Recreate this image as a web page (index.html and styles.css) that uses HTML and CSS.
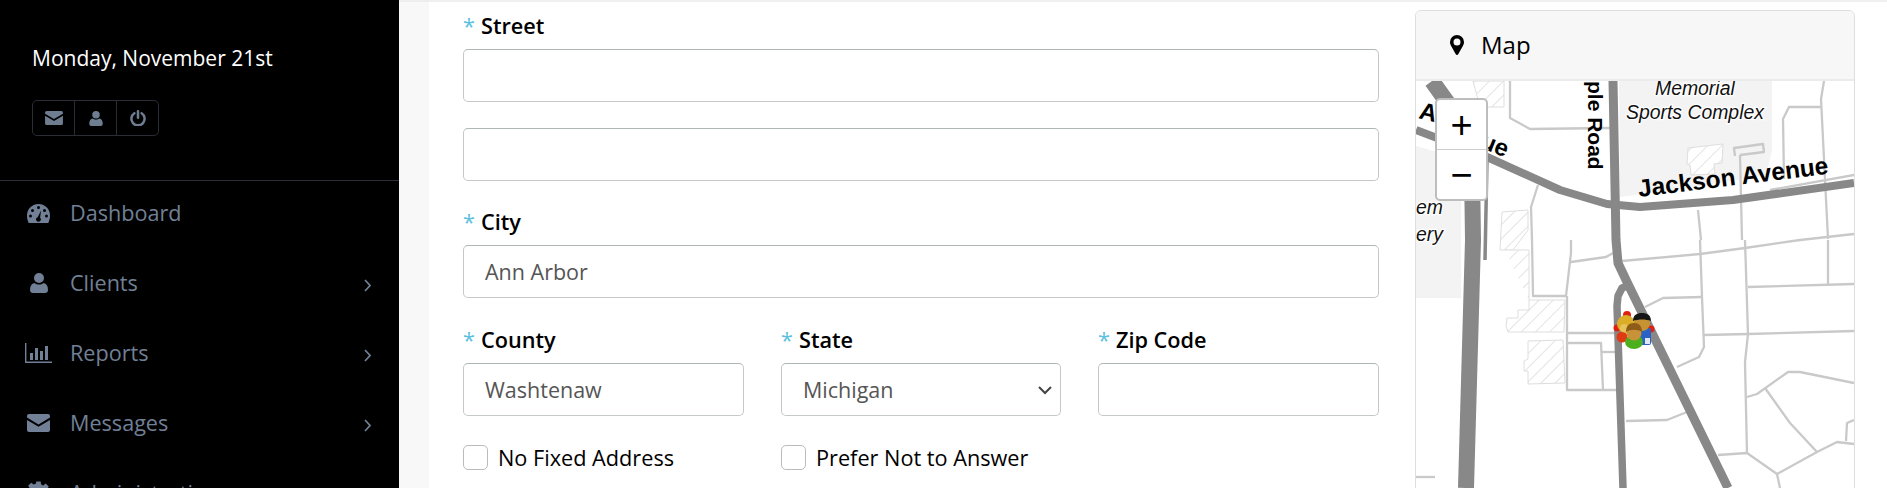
FILE: index.html
```html
<!DOCTYPE html>
<html lang="en">
<head>
<meta charset="utf-8">
<title>Client address</title>
<link rel="stylesheet" href="styles.css">
</head>
<body>
<svg class="defs" width="0" height="0" aria-hidden="true">
  <defs>
    <symbol id="i-mail" viewBox="0 0 23 18"><path fill="currentColor" d="M2 0h19a2 2 0 0 1 2 2v1.600L11.500 10.400 0 3.600V2a2 2 0 0 1 2-2zM0 6l11.500 6.800L23 6v10a2 2 0 0 1-2 2H2a2 2 0 0 1-2-2z"/></symbol>
    <symbol id="i-user" viewBox="0 0 18 20"><circle fill="currentColor" cx="9" cy="5" r="5"/><path fill="currentColor" d="M0 17c0-4 1.500-6.500 4.500-7 1.200 1 2.800 1.500 4.500 1.500s3.300-.5 4.500-1.500c3 .5 4.500 3 4.500 7 0 2-1.200 3-3 3H3c-1.800 0-3-1-3-3z"/></symbol>
    <symbol id="i-power" viewBox="0 0 16 16"><path fill="none" stroke="currentColor" stroke-width="2.500" stroke-linecap="round" d="M4.400 3.200a6.600 6.600 0 1 0 7.200 0M8 1.200v6.500"/></symbol>
    <symbol id="i-gauge" viewBox="0 0 23 19"><path fill="currentColor" fill-rule="evenodd" d="M11.500 0A11.500 11.500 0 0 1 23 11.500c0 3-.7 5.400-1.700 7.500H1.700C.7 16.900 0 14.500 0 11.500A11.500 11.500 0 0 1 11.500 0zM11.500 2a1.500 1.500 0 1 0 0 3 1.500 1.500 0 0 0 0-3zM5.500 5a1.500 1.500 0 1 0 0 3 1.500 1.500 0 0 0 0-3zM17.500 5a1.500 1.500 0 1 0 0 3 1.500 1.500 0 0 0 0-3zM3.500 10.500a1.500 1.500 0 1 0 0 3 1.500 1.500 0 0 0 0-3zM19.500 10.500a1.500 1.500 0 1 0 0 3 1.500 1.500 0 0 0 0-3zM14 6.500l-3.300 6.700a2.300 2.300 0 1 0 2.400.6z"/></symbol>
    <symbol id="i-bars" viewBox="0 0 27 20"><path fill="currentColor" d="M0 0h1.400v18.600H27V20H0zM5 10h3v7H5zM10 5h3v12h-3zM15 8h3v9h-3zM20 3h3v14h-3z"/></symbol>
    <symbol id="i-gear" viewBox="-2 0 29 28"><path fill="currentColor" fill-rule="evenodd" d="M10 0h5l.6 3.600 2.300 1 3-2.100 3.500 3.500-2.100 3 1 2.300 3.600.6v5l-3.600.6-1 2.300 2.100 3-3.500 3.500-3-2.100-2.300 1L15 28h-5l-.6-3.600-2.300-1-3 2.100L.6 22l2.100-3-1-2.300L-2 16v-5l3.600-.6 1-2.300-2.100-3L4 1.600l3 2.100 2.300-1zM12.500 9a4.500 4.500 0 1 0 0 9 4.500 4.500 0 0 0 0-9z"/></symbol>
    <symbol id="i-angle" viewBox="0 0 7 13"><path fill="none" stroke="currentColor" stroke-width="1.700" d="M1 1l5 5.500L1 12"/></symbol>
    <pattern id="hatch" width="10" height="10" patternUnits="userSpaceOnUse" patternTransform="rotate(45)">
      <rect width="10" height="10" fill="#fff"/>
      <line x1="0" y1="0" x2="0" y2="10" stroke="#d8d8d8" stroke-width="1.400"/>
    </pattern>
  </defs>
</svg>

<aside class="sidebar">
  <header class="side-head">
    <div class="date">Monday, November 21st</div>
    <div class="btn-group">
      <a class="btn-cell"><svg class="ic-mail"><use href="#i-mail"/></svg></a>
      <a class="btn-cell"><svg class="ic-user"><use href="#i-user"/></svg></a>
      <a class="btn-cell"><svg class="ic-power"><use href="#i-power"/></svg></a>
    </div>
  </header>
  <nav class="nav">
    <a class="nav-item"><span class="nav-icon"><svg class="n-gauge"><use href="#i-gauge"/></svg></span><span class="nav-text">Dashboard</span></a>
    <a class="nav-item"><span class="nav-icon"><svg class="n-user"><use href="#i-user"/></svg></span><span class="nav-text">Clients</span><svg class="chev"><use href="#i-angle"/></svg></a>
    <a class="nav-item"><span class="nav-icon"><svg class="n-bars"><use href="#i-bars"/></svg></span><span class="nav-text">Reports</span><svg class="chev"><use href="#i-angle"/></svg></a>
    <a class="nav-item"><span class="nav-icon"><svg class="n-mail"><use href="#i-mail"/></svg></span><span class="nav-text">Messages</span><svg class="chev"><use href="#i-angle"/></svg></a>
    <a class="nav-item"><span class="nav-icon"><svg class="n-gear"><use href="#i-gear"/></svg></span><span class="nav-text">Administration</span><svg class="chev"><use href="#i-angle"/></svg></a>
  </nav>
</aside>

<div class="gutter"></div>

<main class="panel">
  <form class="form">
    <div class="group">
      <label class="label"><span class="star">*</span>Street</label>
      <input class="input stack" type="text">
      <input class="input" type="text">
    </div>
    <div class="group">
      <label class="label"><span class="star">*</span>City</label>
      <input class="input" type="text" value="Ann Arbor">
    </div>
    <div class="cols group-loose">
      <div>
        <label class="label"><span class="star">*</span>County</label>
        <input class="input" type="text" value="Washtenaw">
      </div>
      <div>
        <label class="label"><span class="star">*</span>State</label>
        <select class="input select"><option>Michigan</option></select>
      </div>
      <div>
        <label class="label"><span class="star">*</span>Zip Code</label>
        <input class="input" type="text">
      </div>
    </div>
    <div class="cols checks">
      <label class="check"><input class="box" type="checkbox">No Fixed Address</label>
      <label class="check"><input class="box" type="checkbox">Prefer Not to Answer</label>
    </div>
  </form>

  <section class="card">
    <header class="card-head">
      <svg class="pin" viewBox="0 0 14 20"><path fill="#000" fill-rule="evenodd" d="M7 0a7 7 0 0 1 7 7c0 1.600-.4 2.500-1 3.700L8.200 19.200a1.300 1.300 0 0 1-2.400 0L1 10.700C.4 9.500 0 8.600 0 7a7 7 0 0 1 7-7zM7 3.500a3.500 3.500 0 1 0 0 7 3.500 3.500 0 0 0 0-7z"/></svg>
      <span>Map</span>
    </header>
    <div class="map">
      <svg class="map-art" viewBox="1416 81 438 407" width="438" height="407">
        <rect x="1416" y="81" width="438" height="407" fill="#fff"/>
        <g fill="#f3f3f3">
          <path d="M1619 81h153v70l-6 24-70 12-76 10z"/>
          <path d="M1416 146l45 13v139h-45z"/>
        </g>
        <g fill="url(#hatch)" stroke="#dedede" stroke-width="1">
          <path d="M1473 81l7 26h24V81z"/>
          <path d="M1502 212l26-2v20l-15 20h-13z"/>
          <path d="M1688 148l35-4-1 19-8 1 1 10-24 1-1-10-3-1z"/>
          <path d="M1505 250h24v60h-11v8h-11l-1 8 2 6h56l1-32h-36"/>
          <path d="M1528 341l35-1 2 43-37 1v-13l-4 0v-10l4-2z"/>
        </g>
        <g fill="none" stroke="#c9c9c9" stroke-width="2.300" stroke-linejoin="round">
          <path d="M1510 81v37l20 11 80-1"/>
          <path d="M1538 185l-7 22 1 33 1 56h33l5-43V240"/>
          <path d="M1571 262l35-5 7-4"/>
          <path d="M1622 261l78-7 45-6 55-8 54-6"/>
          <path d="M1700 240l2 57 2 50-5 10-22 10"/>
          <path d="M1645 307l18-9 39-1"/>
          <path d="M1745 240l3 94-3 28 2 92"/>
          <path d="M1748 287l106-3"/>
          <path d="M1828 240v46"/>
          <path d="M1704 335l44-1 106-3"/>
          <path d="M1747 397l10-3 31-22h12l54 11"/>
          <path d="M1765 388l25 35 27 29"/>
          <path d="M1718 455l29-2 30 21 40-22 20-10 17 2"/>
          <path d="M1777 474l3 14"/>
          <path d="M1846 441l1-18 7-3"/>
          <path d="M1626 421l41-1 20-8"/>
          <path d="M1568 333h49"/>
          <path d="M1567 296v94h50"/>
          <path d="M1568 343h33l2 47"/>
          <path d="M1602 352h16"/>
          <path d="M1416 477h19"/>
          <path d="M1824 81l-3 18 7 140"/>
          <path d="M1784 179l-1-60 6-12h33"/>
          <path d="M1742 240l-2-85"/>
          <path d="M1735 156l-1-8 29-4 1 8-24 3"/>
          <path d="M1698 210l3 30"/>
          <path d="M1770 190l84-15"/>
        </g>
        <g fill="none" stroke="#888" stroke-linejoin="round" stroke-linecap="butt">
          <path d="M1416 130l71 27 73 33 47 14 33 3 93-7 121-17" stroke-width="8"/>
          <path d="M1613 81l3 159 2 23 9 19 101 206" stroke-width="9"/>
          <path d="M1630 285l-8 3-4 8-1 10 6 182" stroke-width="7.500"/>
          <path d="M1432 81l20 28 20 60 1 71-7 248" stroke-width="16"/>
          <path d="M1487 160l-2 100" stroke-width="3.500"/>
        </g>
        <g>
          <text transform="translate(1639 197) rotate(-7)" class="t-jackson">Jackson Avenue</text>
          <text transform="translate(1588 81) rotate(90)" class="t-road">ple Road</text>
          <text class="t-road t-big" transform="translate(1418 118) rotate(14)">A</text>
          <text class="t-road t-big" transform="translate(1479 147) rotate(22)">ue</text>
        </g>
        <g class="lbl-it">
          <text x="1655" y="95">Memorial</text>
          <text x="1626" y="119">Sports Complex</text>
          <text x="1416" y="214">em</text>
          <text x="1416" y="241">ery</text>
        </g>
        <g class="cluster">
          <circle cx="1617" cy="328" r="3.500" fill="#dd2211"/>
          <circle cx="1627" cy="315" r="4" fill="#dd2211"/>
          <circle cx="1651" cy="329" r="3.500" fill="#dd2211"/>
          <circle cx="1622" cy="337" r="5.500" fill="#e03a12"/>
          <rect x="1638" y="328" width="13" height="17" rx="2" fill="#2a62c4"/>
          <rect x="1645" y="338" width="5" height="6" fill="#dfe6f5"/>
          <circle cx="1626" cy="324" r="9" fill="#dcae28"/>
          <circle cx="1624" cy="328" r="4" fill="#e7c45a"/>
          <circle cx="1642" cy="323" r="8" fill="#c79332"/>
          <path d="M1633 321c0-6 4-8 9-8s9 2 9 8c-5-2-13-2-18 0z" fill="#161616"/>
          <ellipse cx="1634" cy="342" rx="9" ry="7" fill="#4caf1e"/>
          <circle cx="1634" cy="333" r="7.500" fill="#c89238"/>
          <path d="M1626 332c0-6 3-9 8-9s8 3 8 9c-4-3-12-3-16 0z" fill="#8f5b18"/>
        </g>
      </svg>
      <div class="zoom-bar">
        <a class="zoom-btn zoom-in">+</a>
        <a class="zoom-btn">−</a>
      </div>
    </div>
  </section>
</main>
</body>
</html>
```

FILE: styles.css
```css
* { box-sizing: border-box; }

html, body {
  height: 100%;
}

body {
  margin: 0;
  display: flex;
  overflow: hidden;
  background: #fff;
  font-family: "Open Sans", "Liberation Sans", sans-serif;
  font-size: 21.700px;
  line-height: 30px;
  color: #000;
}

.defs { position: absolute; }

/* Sidebar */
.sidebar {
  flex: 0 0 399px;
  background: #000;
  color: #718096;
}

.side-head {
  height: 181px;
  padding: 43px 0 0 32px;
  border-bottom: 1px solid #2c2f36;
}

.date {
  color: #fff;
  font-size: 21px;
}

.btn-group {
  display: flex;
  width: 127px;
  height: 36px;
  margin-top: 27px;
  border: 1px solid #2a2d35;
  border-radius: 5px;
}

.btn-cell {
  flex: 1;
  display: flex;
  align-items: center;
  justify-content: center;
  color: #6f7d90;
}

.btn-cell + .btn-cell { border-left: 1px solid #2a2d35; }

.ic-mail { width: 18px; height: 14px; }
.ic-user { width: 14px; height: 15px; }
.ic-power { width: 16px; height: 16px; }

.nav { padding-top: 17px; }

.nav-item {
  display: flex;
  align-items: center;
  height: 30px;
  margin-bottom: 40px;
  padding-left: 24px;
  padding-right: 28px;
  font-size: 21.600px;
}

.nav-icon {
  flex: 0 0 29px;
  display: flex;
  justify-content: center;
  margin-right: 17px;
}

.nav-text { flex: 1; }

.n-gauge { width: 23px; height: 19px; }
.n-user { width: 18px; height: 20px; }
.n-bars { width: 27px; height: 20px; }
.n-mail { width: 23px; height: 18px; }
.n-gear { width: 25px; height: 25px; }

.chev { width: 7px; height: 13px; margin-top: 5px; }

/* Gutter */
.gutter {
  flex: 0 0 30px;
  background: #f8f8f8;
  border-top: 2px solid #eee;
}

/* Main panel */
.panel {
  flex: 1;
  display: flex;
  gap: 36px;
  padding: 9px 32px 0 34px;
  border-top: 2px solid #f0f0f0;
  align-items: flex-start;
}

.form { flex: 0 0 916px; }

.group { margin-bottom: 26px; }
.group-loose { margin-top: 27px; }

.label {
  display: block;
  height: 30px;
  margin-bottom: 8px;
  font-weight: 600;
}

.star {
  color: #5bc0de;
  font-weight: 400;
  margin-right: 6px;
}

.input {
  display: block;
  width: 100%;
  height: 53px;
  padding: 0 21px;
  border: 1px solid #c4c8c8;
  border-top-color: #b0b6b6;
  border-radius: 5px;
  background: #fff;
  font: 21.500px/30px "Open Sans", "Liberation Sans", sans-serif;
  color: #555;
}

.stack { margin-bottom: 26px; }

.select {
  appearance: none;
  background-image: url("data:image/svg+xml,%3Csvg xmlns='http://www.w3.org/2000/svg' viewBox='0 0 14 10'%3E%3Cpath fill='none' stroke='%23444' stroke-width='2' d='M1 2l6 6 6-6'/%3E%3C/svg%3E");
  background-repeat: no-repeat;
  background-position: right 8px center;
  background-size: 14px 10px;
}

.cols {
  display: grid;
  grid-template-columns: 281px 280px 281px;
  column-gap: 37px;
}

.checks { margin-top: 29px; }

.check {
  display: flex;
  align-items: center;
  gap: 10px;
  height: 25px;
}

.box {
  appearance: none;
  flex: 0 0 25px;
  width: 25px;
  height: 25px;
  margin: 0;
  border: 1px solid #b9bcbc;
  border-radius: 5px;
  background: #fff;
}

/* Map card */
.card {
  flex: 0 0 440px;
  height: 600px;
  margin-top: -1px;
  border: 1px solid #dedede;
  border-radius: 6px;
  overflow: hidden;
}

.card-head {
  display: flex;
  align-items: center;
  gap: 17px;
  height: 70px;
  padding-left: 34px;
  background: #f7f7f7;
  border-bottom: 2px solid #ebebeb;
  font-size: 24px;
}

.pin { width: 14px; height: 20px; }

.map {
  position: relative;
  height: 520px;
  background: #fff;
}

.map-art { display: block; }

.zoom-bar {
  position: absolute;
  top: 17px;
  left: 19px;
  width: 53px;
  height: 103px;
  background: #fff;
  border: 2px solid #bdbdbd;
  border-radius: 5px;
  display: flex;
  flex-direction: column;
}

.zoom-btn {
  flex: 1;
  display: flex;
  align-items: center;
  justify-content: center;
  font: 38px/1 "Liberation Sans", sans-serif;
  color: #000;
}

.zoom-in { border-bottom: 1px solid #ccc; }

/* Map labels */
.t-jackson {
  font: bold 24.500px "Liberation Sans", sans-serif;
  fill: #000;
}

.t-road {
  font: bold 21px "Liberation Sans", sans-serif;
  fill: #000;
}

.t-big { font-size: 24px; }

.lbl-it text {
  font: italic 19.400px "Liberation Sans", sans-serif;
  fill: #111;
  stroke: #fff;
  stroke-width: 2.500px;
  paint-order: stroke;
}
```
